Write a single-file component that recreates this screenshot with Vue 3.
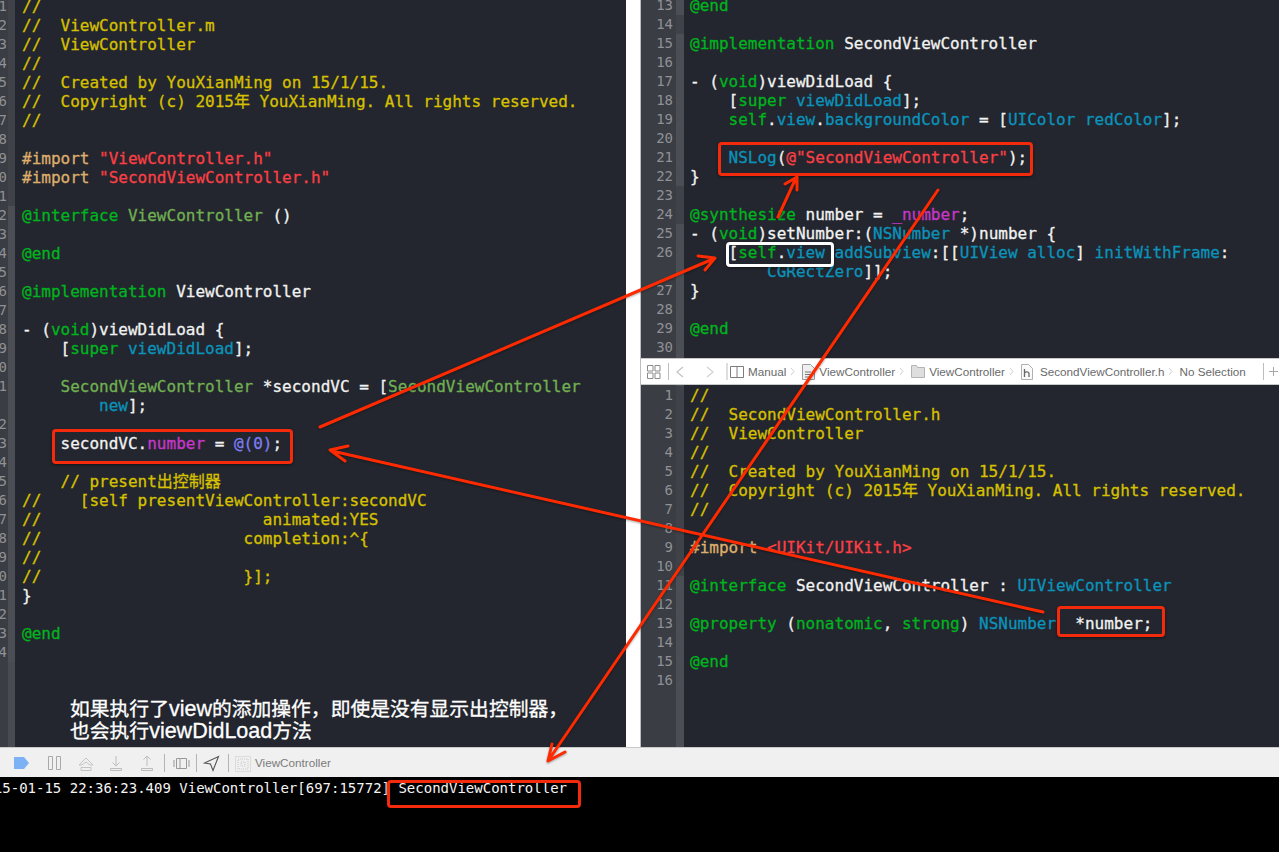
<script setup>
const W = 'w', G = 'g', C = 'c', B = 'b', R = 'r', P = 'p', I = 'i', U = 'u', N = 'n'
const c = (t) => [[C, t]]
const voidLoad = [[W, '- ('], [G, 'void'], [W, ')viewDidLoad {']]

const leftLines = [
  { n: 1, t: c('//') },
  { n: 2, t: c('//  ViewController.m') },
  { n: 3, t: c('//  ViewController') },
  { n: 4, t: c('//') },
  { n: 5, t: c('//  Created by YouXianMing on 15/1/15.') },
  { n: 6, t: c('//  Copyright (c) 2015年 YouXianMing. All rights reserved.') },
  { n: 7, t: c('//') },
  { n: 8, t: [] },
  { n: 9, t: [[I, '#import '], [R, '"ViewController.h"']] },
  { n: 10, t: [[I, '#import '], [R, '"SecondViewController.h"']] },
  { n: 11, t: [] },
  { n: 12, s: 1, t: [[G, '@interface '], [U, 'ViewController '], [W, '()']] },
  { n: 13, s: 1, t: [] },
  { n: 14, s: 1, t: [[G, '@end']] },
  { n: 15, s: 1, t: [] },
  { n: 16, s: 1, t: [[G, '@implementation '], [W, 'ViewController']] },
  { n: 17, s: 1, t: [] },
  { n: 18, s: 1, t: voidLoad },
  { n: 19, s: 1, t: [[W, '    ['], [G, 'super '], [B, 'viewDidLoad'], [W, '];']] },
  { n: 20, s: 1, t: [] },
  { n: 21, s: 1, t: [[U, '    SecondViewController '], [W, '*secondVC = ['], [U, 'SecondViewController']] },
  { n: '', s: 1, t: [[B, '        new'], [W, '];']] },
  { n: 22, s: 1, t: [] },
  { n: 23, s: 1, t: [[W, '    secondVC.'], [P, 'number'], [W, ' = '], [N, '@(0)'], [W, ';']] },
  { n: 24, s: 1, t: [] },
  { n: 25, s: 1, t: c('    // present出控制器') },
  { n: 26, s: 1, t: c('//    [self presentViewController:secondVC') },
  { n: 27, s: 1, t: c('//                       animated:YES') },
  { n: 28, s: 1, t: c('//                     completion:^{') },
  { n: 29, s: 1, t: c('//') },
  { n: 30, s: 1, t: c('//                     }];') },
  { n: 31, s: 1, t: [[W, '}']] },
  { n: 32, s: 1, t: [] },
  { n: 33, s: 1, t: [[G, '@end']] },
  { n: 34, s: 1, t: [] },
]

const topLines = [
  { n: 13, s: 1, t: [[G, '@end']] },
  { n: 14, t: [] },
  { n: 15, s: 1, t: [[G, '@implementation '], [W, 'SecondViewController']] },
  { n: 16, s: 1, t: [] },
  { n: 17, s: 1, t: voidLoad },
  { n: 18, s: 1, t: [[W, '    ['], [G, 'super '], [B, 'viewDidLoad'], [W, '];']] },
  { n: 19, s: 1, t: [[G, '    self'], [W, '.'], [B, 'view'], [W, '.'], [B, 'backgroundColor'], [W, ' = ['], [B, 'UIColor redColor'], [W, '];']] },
  { n: 20, s: 1, t: [] },
  { n: 21, s: 1, t: [[B, '    NSLog'], [W, '('], [R, '@"SecondViewController"'], [W, ');']] },
  { n: 22, s: 1, t: [[W, '}']] },
  { n: 23, t: [] },
  { n: 24, t: [[G, '@synthesize '], [W, 'number = '], [P, '_number'], [W, ';']] },
  { n: 25, s: 1, t: [[W, '- ('], [G, 'void'], [W, ')setNumber:('], [B, 'NSNumber '], [W, '*)number {']] },
  { n: 26, s: 1, t: [[W, '    ['], [G, 'self'], [W, '.'], [B, 'view addSubview'], [W, ':[['], [B, 'UIView alloc'], [W, '] '], [B, 'initWithFrame'], [W, ':']] },
  { n: '', s: 1, t: [[B, '        CGRectZero'], [W, ']];']] },
  { n: 27, s: 1, t: [[W, '}']] },
  { n: 28, s: 1, t: [] },
  { n: 29, s: 1, t: [[G, '@end']] },
  { n: 30, s: 1, t: [] },
]

const bottomLines = [
  { n: 1, t: c('//') },
  { n: 2, t: c('//  SecondViewController.h') },
  { n: 3, t: c('//  ViewController') },
  { n: 4, t: c('//') },
  { n: 5, t: c('//  Created by YouXianMing on 15/1/15.') },
  { n: 6, t: c('//  Copyright (c) 2015年 YouXianMing. All rights reserved.') },
  { n: 7, t: c('//') },
  { n: 8, t: [] },
  { n: 9, t: [[I, '#import '], [R, '<UIKit/UIKit.h>']] },
  { n: 10, t: [] },
  { n: 11, s: 1, t: [[G, '@interface '], [W, 'SecondViewController : '], [B, 'UIViewController']] },
  { n: 12, s: 1, t: [] },
  { n: 13, s: 1, t: [[G, '@property '], [W, '('], [G, 'nonatomic'], [W, ', '], [G, 'strong'], [W, ') '], [B, 'NSNumber'], [W, '  *number;']] },
  { n: 14, s: 1, t: [] },
  { n: 15, s: 1, t: [[G, '@end']] },
  { n: 16, s: 1, t: [] },
]

const panes = { leftLines, topLines, bottomLines }
</script>

<template>
  <div class="app">
    <div class="main">
      <section class="pane pane-left">
        <div class="lines shift-left">
          <div v-for="(l, i) in panes.leftLines" :key="i" class="row">
            <span class="num num-left">{{ l.n }}</span>
            <span class="strip strip-left" :class="{ lit: l.s }"></span>
            <span class="code code-left"><span v-for="(t, j) in l.t" :key="j" :class="t[0]">{{ t[1] }}</span></span>
          </div>
        </div>
      </section>
      <div class="divider"></div>
      <div class="right">
        <section class="pane pane-top">
          <div class="lines shift-top">
            <div v-for="(l, i) in panes.topLines" :key="i" class="row">
              <span class="num">{{ l.n }}</span>
              <span class="strip" :class="{ lit: l.s }"></span>
              <span class="code"><span v-for="(t, j) in l.t" :key="j" :class="t[0]">{{ t[1] }}</span></span>
            </div>
          </div>
        </section>
        <header class="jump">
          <svg class="ji" width="97" height="20" viewBox="0 0 97 20" fill="none" stroke="#8a8a8a">
            <path d="M.5 3.5h5.5v5.500H.5zM8 3.500h5v5.500H8zM.5 11h5.500v5.500H.5zM8 11h5v5.500H8z" />
            <path d="M21.500 1v17M80 1v17" stroke="#bdbdbd" />
            <path d="M36 5l-6 5 6 5" stroke="#c4c4c4" stroke-width="1.300" />
            <path d="M60 5l6 5-6 5" stroke="#d4d4d4" stroke-width="1.300" />
            <path d="M83.500 4.500h13v11h-13zM90 4.500v11" stroke="#7c7c7c" />
          </svg>
          <span class="crumb crumb-manual">Manual</span>
          <svg class="chev" width="5" height="9" viewBox="0 0 5 9" fill="none" stroke="#cfcfcf"><path d="M1 1l3 3.500-3 3.500" /></svg>
          <svg class="file" width="13" height="16" viewBox="0 0 13 16" fill="#efefef" stroke="#9c9c9c"><path d="M.5.500h8l4 4v11H.5z" /><path d="M3 8h6M3 10.500h6M3 13h4" stroke="#777" /></svg>
          <span class="crumb">ViewController</span>
          <svg class="chev" width="5" height="9" viewBox="0 0 5 9" fill="none" stroke="#cfcfcf"><path d="M1 1l3 3.500-3 3.500" /></svg>
          <svg class="file" width="14" height="13" viewBox="0 0 14 13" fill="#dedede" stroke="#b4b4b4"><path d="M.5 12.500v-12h5l1 2h7v10z" /></svg>
          <span class="crumb">ViewController</span>
          <svg class="chev" width="5" height="9" viewBox="0 0 5 9" fill="none" stroke="#cfcfcf"><path d="M1 1l3 3.500-3 3.500" /></svg>
          <svg class="file file-h" width="12" height="16" viewBox="0 0 12 16" fill="#fafafa" stroke="#b0b0b0"><path d="M.5.500h7l4 4v11H.5z" /><path d="M3.500 5v8M3.500 9c1-1.500 4.500-1.500 4.500 .5V13" stroke="#666" stroke-width="1.300" fill="none" /></svg>
          <span class="crumb">SecondViewController.h</span>
          <svg class="chev" width="5" height="9" viewBox="0 0 5 9" fill="none" stroke="#cfcfcf"><path d="M1 1l3 3.500-3 3.500" /></svg>
          <span class="crumb crumb-none">No Selection</span>
          <i class="jsep"></i>
          <svg class="plus" width="9" height="9" viewBox="0 0 9 9" stroke="#a8a8a8"><path d="M4.500 0v9M0 4.500h9" /></svg>
        </header>
        <section class="pane pane-bottom">
          <div class="lines shift-bottom">
            <div v-for="(l, i) in panes.bottomLines" :key="i" class="row">
              <span class="num">{{ l.n }}</span>
              <span class="strip" :class="{ lit: l.s }"></span>
              <span class="code"><span v-for="(t, j) in l.t" :key="j" :class="t[0]">{{ t[1] }}</span></span>
            </div>
          </div>
        </section>
      </div>
    </div>
    <footer class="debug">
      <svg width="251" height="22" viewBox="0 0 251 22" fill="none" stroke="#bcbcbc">
        <path d="M14 5h10l5 6-5 6H14z" fill="#7db1f5" stroke="none" />
        <path d="M48.500 4.500h4v13h-4zM56.500 4.500h4v13h-4z" stroke="#a9a9a9" />
        <path d="M79 13l7-7 7 7h-3l-4-3-4 3zM81 15.500h10v3H81z" stroke="#c4c4c4" />
        <path d="M116 4v10M112.500 10.500l3.500 3.500 3.500-3.500M110.500 16.500h11v2h-11z" />
        <path d="M147 14V4M143.500 7.500L147 4l3.500 3.500M141.500 16.500h11v2h-11z" />
        <path d="M164.500 2v18M196.500 2v18M228.500 2v18" stroke="#b4b4b4" />
        <path d="M176.500 6.500h10v10h-10zM174 8v7M189 8v7M180 6.500v10" stroke="#999" />
        <path d="M204.500 11l14-6.500-5.500 14-2.500-6.500z" stroke="#555" stroke-width="1.100" />
        <path d="M235.500 4.500h15v15h-15zM238 7h10v10h-10zM241 10h4v4h-4z" stroke="#c8c8c8" stroke-dasharray="1 1" />
      </svg>
      <span class="debug-label">ViewController</span>
    </footer>
    <div class="console"><span class="log">2015-01-15 22:36:23.409 ViewController[697:15772] SecondViewController</span></div>

    <div class="note">如果执行了<span class="lat">view</span>的添加操作，即使是没有显示出控制器，<br />也会执行<span class="lat">viewDidLoad</span>方法</div>
    <div class="box box-nslog"></div>
    <div class="box box-white"></div>
    <div class="box box-number"></div>
    <div class="box box-prop"></div>
    <div class="box box-console"></div>
    <svg class="arrows" width="1279" height="852" viewBox="0 0 1279 852" fill="none" stroke="#ff2a00" stroke-width="3" stroke-linejoin="round" stroke-linecap="round">
      <path d="M320 427L713 259M698 256L715 258L705 270" />
      <path d="M1043 612L332 451M348 446L330 450L345 461" />
      <path d="M938 190L550 758M552 744L548 761L565 752" />
      <path d="M778 217L795 180M785 184L797 177L797 190" />
    </svg>
  </div>
</template>

<style scoped>
.app {
  position: relative;
  width: 1279px;
  height: 852px;
  overflow: hidden;
  display: flex;
  flex-direction: column;
  background: #fff;
}
.main {
  display: flex;
  height: 747px;
}
.pane {
  background: #23262e;
  overflow: hidden;
}
.pane-left {
  width: 626px;
  background: linear-gradient(90deg, #3a3d43 0 8px, #484b52 8px 15px, #23262e 15px);
}
.divider {
  width: 14px;
  background: #fff;
  border-right: 1px solid #bdbdbd;
  box-sizing: content-box;
}
.right {
  flex: 1;
  display: flex;
  flex-direction: column;
  min-width: 0;
}
.pane-top {
  height: 358px;
  background: linear-gradient(90deg, #3a3d43 0 35px, #4b4e55 35px 43px, #23262e 43px);
}
.pane-bottom {
  height: 362px;
  background: linear-gradient(90deg, #3a3d43 0 35px, #4b4e55 35px 43px, #23262e 43px);
}
.lines {
  font: 16px/19px "DejaVu Sans Mono", "Noto Sans CJK SC", monospace;
  -webkit-text-stroke: 0.3px currentColor;
}
.shift-left { margin-top: -3px; }
.shift-top { margin-top: -4px; }
.shift-bottom { margin-top: 1px; }
.row {
  display: flex;
  height: 19px;
}
.num {
  width: 32px;
  margin-right: 3px;
  text-align: right;
  color: #8f9196;
  font-size: 14px;
  -webkit-text-stroke: 0;
  flex: none;
}
.num-left {
  width: 7px;
  margin-right: 1px;
  direction: rtl;
  overflow: hidden;
}
.strip {
  flex: none;
  width: 8px;
  background: #3f4248;
}
.strip.lit { background: #4b4e55; }
.strip-left { width: 7px; }
.code {
  margin-left: 6px;
  white-space: pre;
}
.code-left { margin-left: 7px; }
.w { color: #f2f2f2; }
.g { color: #00b41e; }
.c { color: #d6c000; }
.b { color: #0b93bb; }
.r { color: #fb3f45; }
.p { color: #c936c9; }
.i { color: #dfae6c; }
.u { color: #71b052; }
.n { color: #7c7cf0; }

.jump {
  height: 25px;
  background: #fff;
  border-top: 1px solid #c9c9c9;
  border-bottom: 1px solid #c9c9c9;
  display: flex;
  align-items: center;
  padding-left: 6px;
  font: 11.7px "Liberation Sans", Arial, sans-serif;
  color: #6a6a6a;
  overflow: hidden;
}
.ji { flex: none; }
.crumb { white-space: nowrap; }
.crumb-manual { margin-left: 4px; }
.chev { flex: none; margin: 0 4px; }
.file { flex: none; margin: 0 4px 0 3px; }
.file-h { margin: 0 7px 0 3px; }
.crumb-none { margin-left: 2px; }
.jsep {
  width: 1px;
  height: 17px;
  background: #bdbdbd;
  margin-left: 17px;
  flex: none;
}
.plus { flex: none; margin-left: 5px; }

.debug {
  height: 29px;
  background: #f0f0f0;
  border-top: 1px solid #c9c9c9;
  display: flex;
  align-items: center;
}
.debug svg { flex: none; }
.debug-label {
  margin-left: 4px;
  font: 11.700px "Liberation Sans", Arial, sans-serif;
  color: #7a7a7a;
}
.console {
  height: 75px;
  background: #000;
  overflow: hidden;
}
.log {
  display: block;
  margin: 3px 0 0 -23px;
  font: 14px/17px "DejaVu Sans Mono", monospace;
  color: #f4f4f4;
  white-space: pre;
}

.note {
  position: absolute;
  left: 70px;
  top: 698px;
  font: 19.800px/22px "Liberation Sans", "Noto Sans CJK SC", sans-serif;
  -webkit-text-stroke: 0.3px #fff;
  color: #fff;
  white-space: nowrap;
}
.lat { font-size: 21.500px; }
.box {
  position: absolute;
  box-sizing: border-box;
  border: 3px solid #f42a0c;
  border-radius: 4px;
  box-shadow: 0 1px 3px rgba(0, 0, 0, 0.5);
}
.box-nslog { left: 718px; top: 142px; width: 315px; height: 34px; }
.box-white { left: 726px; top: 242px; width: 108px; height: 25px; border-color: #fff; }
.box-number { left: 52px; top: 429px; width: 241px; height: 35px; }
.box-prop { left: 1057px; top: 606px; width: 108px; height: 31px; }
.box-console { left: 387px; top: 780px; width: 194px; height: 28px; }
.arrows {
  position: absolute;
  left: 0;
  top: 0;
  pointer-events: none;
  filter: drop-shadow(0 1px 1px rgba(0, 0, 0, 0.35));
}
</style>
